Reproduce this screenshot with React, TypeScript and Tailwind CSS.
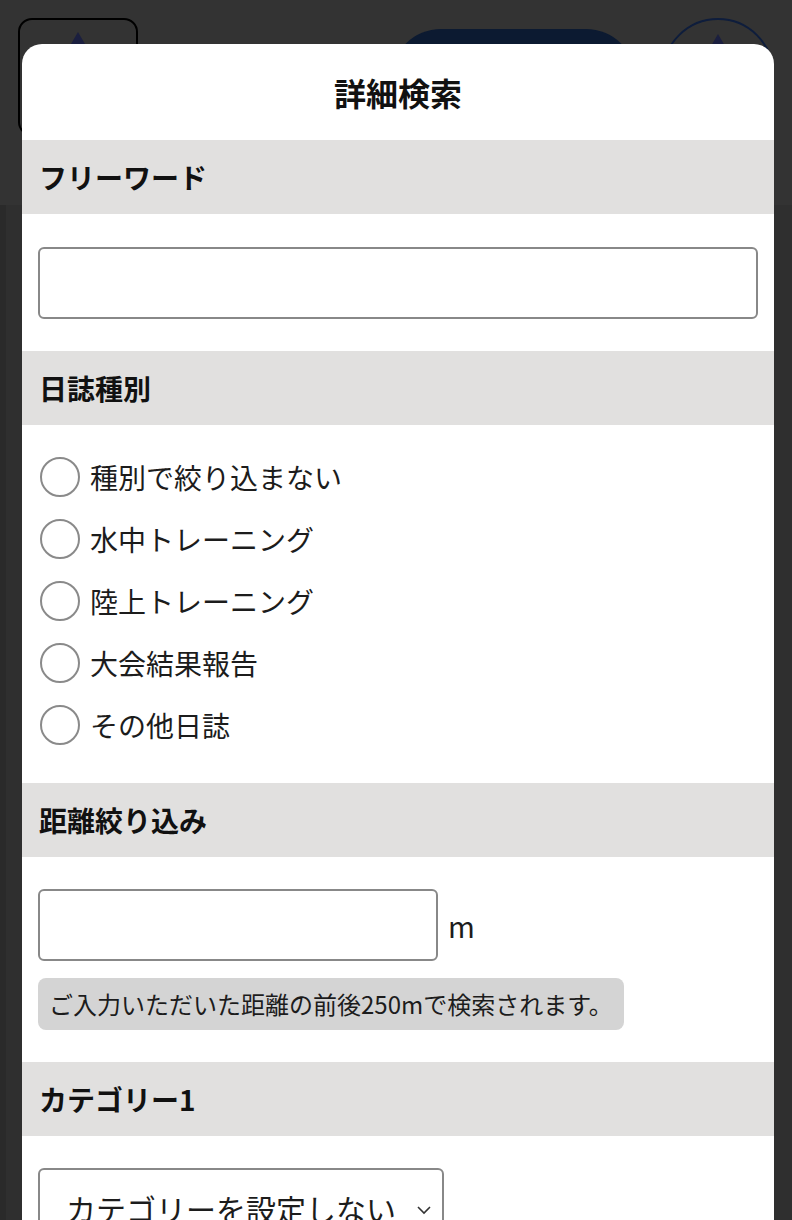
import React from "react";

const jp = { fontFamily: '"Noto Sans CJK JP", "Noto Sans", sans-serif' };

function SectionHeader({ children }: { children: React.ReactNode }) {
  return (
    <div className="h-[74px] bg-[#e1e0df] flex items-center px-[17px]">
      <span className="text-[28px] font-bold text-[#111] leading-none">{children}</span>
    </div>
  );
}

function Radio({ label }: { label: string }) {
  return (
    <label className="flex items-center gap-[10px] h-[40px]">
      <span className="w-[40px] h-[40px] rounded-full border-2 border-[#8a8a8a] bg-white shrink-0" />
      <span className="text-[28px] text-[#1c1c1c] leading-none">{label}</span>
    </label>
  );
}

export default function App() {
  return (
    <div style={jp} className="relative w-[792px] h-[1220px] overflow-hidden bg-[#333333]">
      {/* underlying page (dimmed) */}
      <div className="flex items-start justify-between px-[18px] pt-[18px]">
        <div className="w-[120px] h-[118px] rounded-[14px] border-2 border-black flex justify-center pt-[12px]">
          <svg width="28" height="24" viewBox="0 0 28 24">
            <polygon points="14,0 28,24 0,24" fill="#1b1f3f" />
          </svg>
        </div>
        <div className="flex items-start gap-[26px]">
          <div className="w-[245px] h-[100px] rounded-[50px] bg-[#0c1a31] mt-[11px]" />
          <div className="w-[112px] h-[112px] rounded-full border-2 border-[#0e1d3c] flex justify-center pt-[14px]">
            <svg width="28" height="24" viewBox="0 0 28 24">
              <polygon points="14,0 28,24 0,24" fill="#1b1f3f" />
            </svg>
          </div>
        </div>
      </div>
      <div className="absolute left-0 right-0 top-[205px] bottom-0 flex">
        <div className="w-[6px] bg-[#2a2a2a]" />
        <div className="flex-1 bg-[#2f2f2f]" />
      </div>

      {/* modal */}
      <div className="absolute left-[22px] top-[44px] w-[752px] bottom-[-40px] bg-white rounded-t-[20px] overflow-hidden">
        <div className="h-[96px] flex items-center justify-center">
          <h1 className="text-[32px] font-bold text-[#111] leading-none">詳細検索</h1>
        </div>

        <SectionHeader>フリーワード</SectionHeader>
        <div className="px-[16px] pt-[33px] pb-[32px]">
          <div className="h-[72px] rounded-[6px] border-2 border-[#888] bg-white" />
        </div>

        <SectionHeader>日誌種別</SectionHeader>
        <div className="px-[18px] pt-[32px] pb-[38px] flex flex-col gap-[22px]">
          <Radio label="種別で絞り込まない" />
          <Radio label="水中トレーニング" />
          <Radio label="陸上トレーニング" />
          <Radio label="大会結果報告" />
          <Radio label="その他日誌" />
        </div>

        <SectionHeader>距離絞り込み</SectionHeader>
        <div className="px-[16px] pt-[32px] pb-[32px]">
          <div className="flex items-center gap-[10px]">
            <div className="w-[400px] h-[72px] rounded-[6px] border-2 border-[#888] bg-white" />
            <span className="text-[29px] text-[#1c1c1c] leading-none">m</span>
          </div>
          <div className="mt-[17px] inline-flex items-center h-[52px] px-[11px] rounded-[8px] bg-[#d4d4d4]">
            <span className="text-[24px] text-[#1c1c1c] leading-none">ご入力いただいた距離の前後250mで検索されます。</span>
          </div>
        </div>

        <SectionHeader>カテゴリー1</SectionHeader>
        <div className="px-[16px] pt-[32px]">
          <div className="w-[406px] h-[76px] rounded-[6px] border-2 border-[#888] bg-white flex items-center justify-between pl-[26px] pr-[10px]">
            <span className="text-[30px] text-[#1c1c1c] leading-none pt-[4px]">カテゴリーを設定しない</span>
            <svg width="16" height="10" viewBox="0 0 16 10" className="mt-[8px]">
              <polyline points="2,2 8,8 14,2" fill="none" stroke="#333" strokeWidth="1.6" />
            </svg>
          </div>
        </div>
      </div>
    </div>
  );
}
